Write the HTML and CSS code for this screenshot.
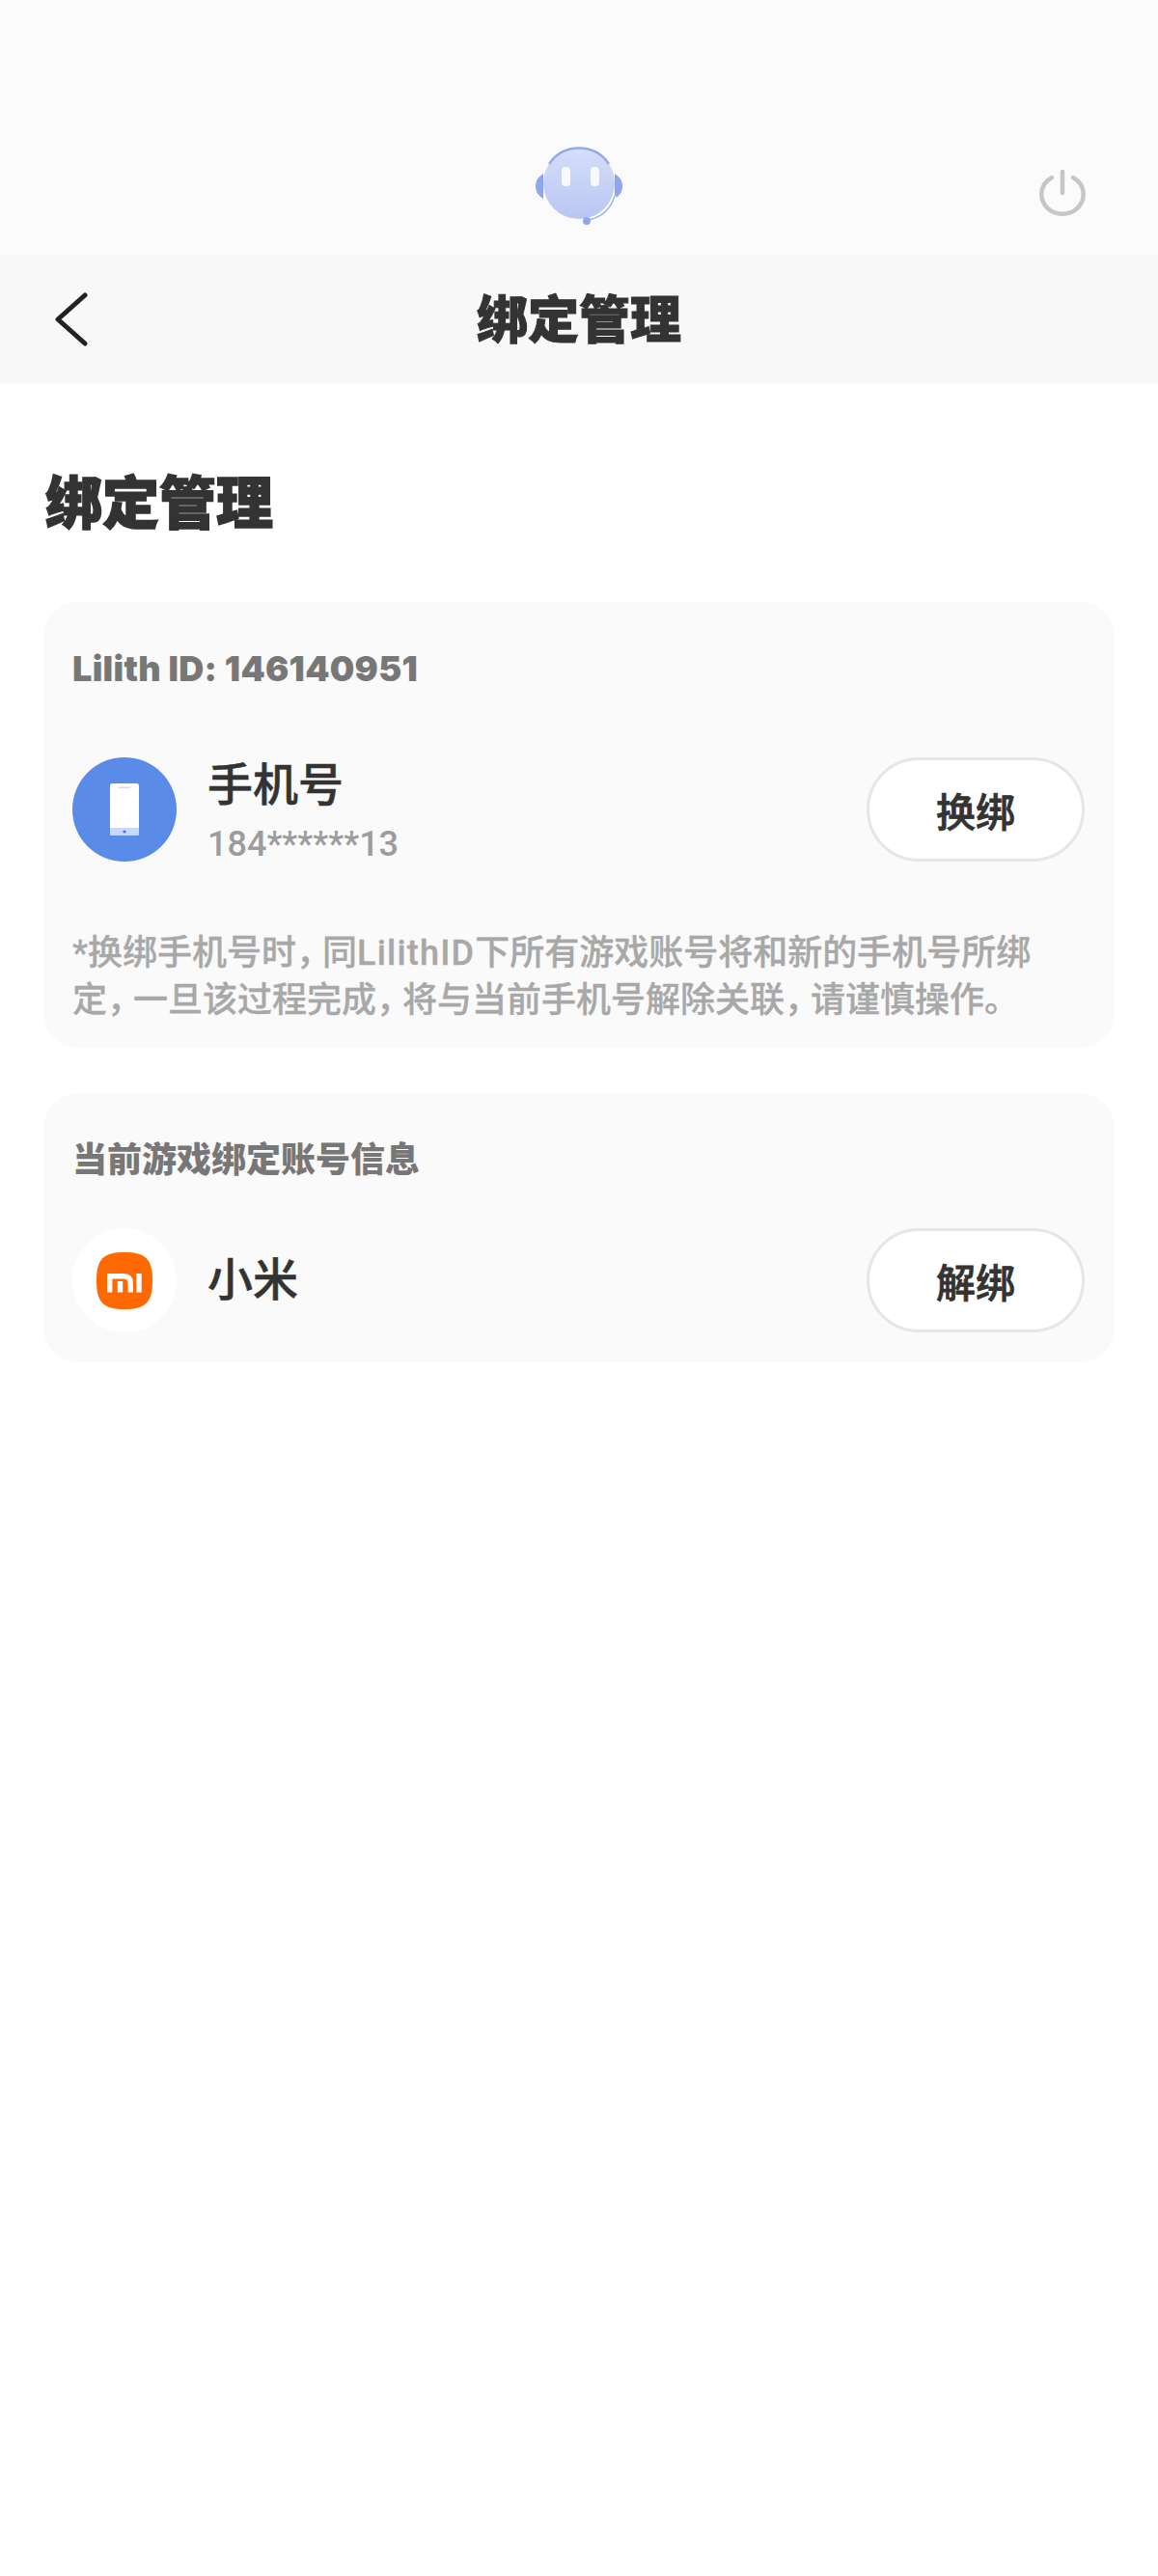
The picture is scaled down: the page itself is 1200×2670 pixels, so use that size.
FILE: index.html
```html
<!DOCTYPE html>
<html lang="zh-CN">
<head>
  <meta charset="UTF-8">
  <title>绑定管理</title>
  <link rel="stylesheet" href="styles.css">
</head>
<body>
  <div class="topbar">
    <span></span>
    <svg class="service" width="92" height="84" viewBox="0 0 92 84">
      <defs>
        <linearGradient id="face" x1="0" y1="0" x2="0" y2="1">
          <stop offset="0" stop-color="#d6def9"/>
          <stop offset="1" stop-color="#b9c6f3"/>
        </linearGradient>
      </defs>
      <path d="M9 28 C3 32 1 36 1 41 C1 46 3 50 9 54 Z" fill="#8fa6ee"/>
      <path d="M83 28 C89 32 91 36 91 41 C91 46 89 50 83 54 Z" fill="#8fa6ee"/>
      <circle cx="46" cy="38" r="37" fill="url(#face)"/>
      <path d="M15 18 C23 6 34 1.5 46 1.5 C58 1.5 69 6 77 18" fill="none" stroke="#94a9ee" stroke-width="2.5"/>
      <rect x="28" y="21" width="9" height="20" rx="4" fill="#fff" opacity="0.85"/>
      <rect x="58" y="21" width="9" height="20" rx="4" fill="#fff" opacity="0.85"/>
      <path d="M83 51 C79 64 70 73 56 76" fill="none" stroke="#fff" stroke-width="4"/>
      <path d="M83 51 C79 64 70 73 56 76" fill="none" stroke="#9db0f0" stroke-width="1.5"/>
      <circle cx="54" cy="77" r="4" fill="#8fa6ee"/>
    </svg>
    <svg class="power" width="48" height="48" viewBox="0 0 48 48" fill="none" stroke="#c6c6c6" stroke-width="4.5" stroke-linecap="round">
      <path d="M24 2 V24"/>
      <path d="M13 8 C6 12 2.3 18 2.3 25 C2.3 37 12 45.7 24 45.7 C36 45.7 45.7 37 45.7 25 C45.7 18 42 12 35 8"/>
    </svg>
  </div>

  <div class="navbar">
    <svg class="back" width="36" height="56" viewBox="0 0 36 56" fill="none" stroke="#222" stroke-width="5" stroke-linecap="round" stroke-linejoin="round">
      <path d="M32 3 L4 28 L32 53"/>
    </svg>
    <div class="nav-title">绑定管理</div>
  </div>

  <div class="content">
    <h1 class="page-title">绑定管理</h1>

    <div class="card card-phone">
      <div class="card-head">Lilith ID: 146140951</div>
      <div class="row">
        <div class="avatar phone">
          <svg width="30" height="54" viewBox="0 0 30 54">
            <rect width="30" height="54" rx="2.5" fill="#fff"/>
            <path d="M0 46 H30 V51.5 A2.5 2.5 0 0 1 27.5 54 H2.5 A2.5 2.5 0 0 1 0 51.5 Z" fill="#c9d7f8"/>
            <circle cx="15" cy="50" r="1.6" fill="#4a74d0"/>
            <rect x="9" y="3.5" width="12" height="1.4" fill="#c9d7f8"/>
          </svg>
        </div>
        <div class="info">
          <div class="name">手机号</div>
          <div class="sub">184******13</div>
        </div>
        <button class="pill">换绑</button>
      </div>
      <p class="note">*换绑手机号时<span class="comma">，</span>同<span class="latin">LilithID</span>下所有游戏账号将和新的手机号所绑<br>定<span class="comma">，</span>一旦该过程完成<span class="comma">，</span>将与当前手机号解除关联<span class="comma">，</span>请谨慎操作。</p>
    </div>

    <div class="card card-game">
      <div class="card-head">当前游戏绑定账号信息</div>
      <div class="row">
        <div class="avatar">
          <svg width="58" height="59" viewBox="0 0 58 59">
            <path d="M29 0 C51 0 58 7 58 29.5 C58 52 51 59 29 59 C7 59 0 52 0 29.5 C0 7 7 0 29 0 Z" fill="#ff6900"/>
            <g fill="none" stroke="#fff" stroke-width="5.4">
              <path d="M13.7 41.5 V24.7 H28 C32.8 24.7 35.3 27.2 35.3 32 V41.5"/>
              <path d="M24.5 30 V41.5"/>
              <path d="M44 22 V41.5"/>
            </g>
          </svg>
        </div>
        <div class="info">
          <div class="name">小米</div>
        </div>
        <button class="pill">解绑</button>
      </div>
    </div>
  </div>
</body>
</html>
```

FILE: styles.css
```css
* {
  box-sizing: border-box;
}

body {
  margin: 0;
  background: #fff;
  color: #333;
  font-family: Roboto, "Noto Sans CJK SC", sans-serif;
}

.topbar {
  height: 265px;
  background: #fbfbfb;
  padding: 152px 75px 0;
  display: grid;
  grid-template-columns: 1fr auto 1fr;
  align-items: start;
}

.service {
  filter: blur(0.6px);
}

.power {
  justify-self: end;
  margin-top: 24px;
  filter: blur(0.6px);
}

.navbar {
  height: 132px;
  background: #f8f8f8;
  padding-left: 56px;
  display: grid;
  grid-template-columns: 1fr auto 1fr;
  align-items: center;
}

.nav-title {
  font-size: 53px;
  font-weight: 900;
  line-height: 1;
  margin-left: -56px;
  padding-top: 5px;
  -webkit-text-stroke: 1px #333;
}

.content {
  padding: 0 45px;
}

.page-title {
  margin: 0;
  padding: 92px 0 67px 2px;
  font-size: 59px;
  font-weight: 900;
  line-height: 68px;
  -webkit-text-stroke: 1.5px #333;
}

.card {
  background: #fafafa;
  border-radius: 36px;
  padding: 47px 31px 0 30px;
  margin-bottom: 47px;
}

.card-phone {
  height: 462px;
}

.card-game {
  height: 279px;
}

.card-head {
  font-family: Inter, "Noto Sans CJK SC", sans-serif;
  font-size: 36px;
  font-weight: 900;
  line-height: 44px;
  color: #777;
}

.card-phone .card-head {
  letter-spacing: 0.3px;
  margin-bottom: 70px;
}

.card-game .card-head {
  margin-bottom: 49px;
}

.row {
  display: flex;
  align-items: center;
  gap: 32px;
  height: 108px;
}

.avatar {
  width: 108px;
  height: 108px;
  flex: none;
  border-radius: 50%;
  background: #fff;
  display: flex;
  align-items: center;
  justify-content: center;
}

.phone {
  background: #5b8be8;
}

.info {
  flex: 1;
}

.name {
  font-size: 47px;
  font-weight: 500;
  line-height: 58px;
  -webkit-text-stroke: 0.5px #333;
}

.sub {
  margin: 10px 0 -4px;
  font-size: 36px;
  font-weight: 500;
  line-height: 44px;
  color: #9c9c9c;
}

.pill {
  width: 226px;
  height: 108px;
  flex: none;
  background: #fff;
  border: 3px solid #e6e6e6;
  border-radius: 54px;
  padding: 0;
  font-family: inherit;
  font-size: 41px;
  font-weight: 500;
  color: #333;
  -webkit-text-stroke: 0.8px #333;
}

.note {
  margin: 71px 0 0;
  font-size: 36px;
  font-weight: 500;
  line-height: 49px;
  color: #a8a8a8;
  white-space: nowrap;
  -webkit-text-stroke: 0.3px #a8a8a8;
}

.comma {
  letter-spacing: -9px;
}

.latin {
  letter-spacing: 1.2px;
}
```
